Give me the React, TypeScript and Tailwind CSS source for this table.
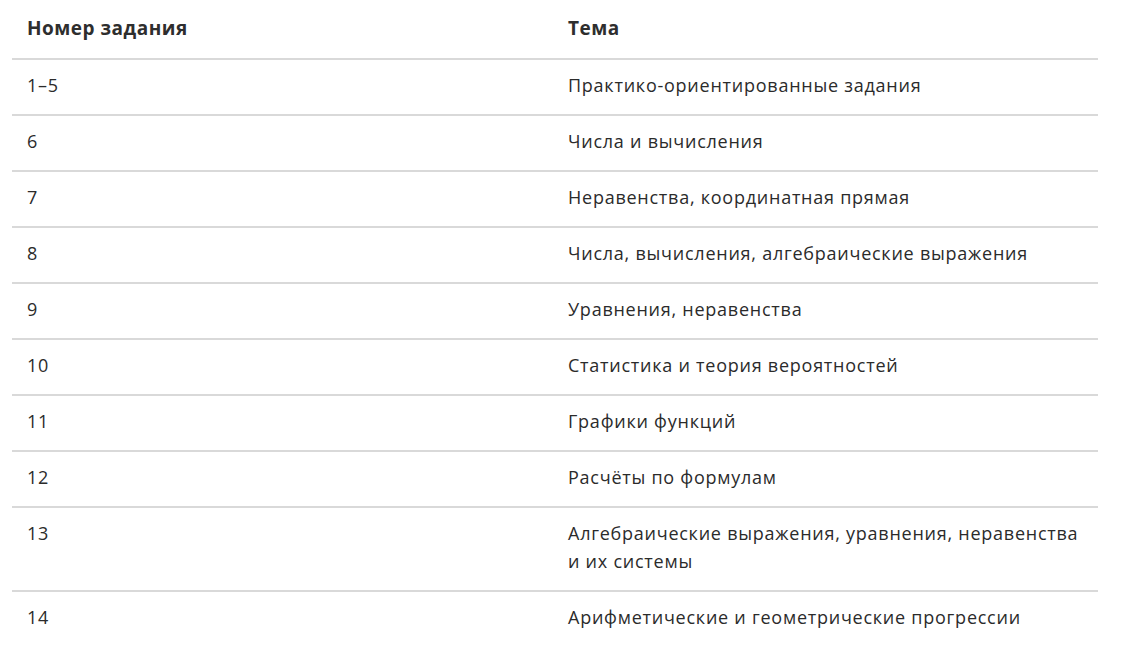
import React from "react";

const rows: [string, string][] = [
  ["1–5", "Практико-ориентированные задания"],
  ["6", "Числа и вычисления"],
  ["7", "Неравенства, координатная прямая"],
  ["8", "Числа, вычисления, алгебраические выражения"],
  ["9", "Уравнения, неравенства"],
  ["10", "Статистика и теория вероятностей"],
  ["11", "Графики функций"],
  ["12", "Расчёты по формулам"],
  ["13", "Алгебраические выражения, уравнения, неравенства и их системы"],
  ["14", "Арифметические и геометрические прогрессии"],
];

export default function App() {
  return (
    <div className="min-h-[656px] w-full bg-white pl-[12px] pr-[30px] text-[#2b2b2b]" style={{ fontFamily: "'Open Sans', 'Noto Sans', sans-serif" }}>
      <div className="grid grid-cols-[541px_1fr] border-b-2 border-[#d9d9d9]">
        <div className="px-[15px] pt-[14px] pb-[16px] text-[19px] font-bold leading-[28px] tracking-[0.5px] text-[#2e2e2e]">Номер задания</div>
        <div className="px-[15px] pt-[14px] pb-[16px] text-[19px] font-bold leading-[28px] tracking-[0.5px] text-[#2e2e2e]">Тема</div>
      </div>
      {rows.map(([n, t], i) => (
        <div
          key={n}
          className={`grid grid-cols-[541px_1fr] ${i < rows.length - 1 ? "border-b-2 border-[#d9d9d9]" : ""}`}
        >
          <div className="px-[15px] pt-[11px] pb-[15px] text-[18px] leading-[28px] tracking-[0.75px]">{n}</div>
          <div className="px-[15px] pt-[11px] pb-[15px] text-[18px] leading-[28px] tracking-[0.75px]">{t}</div>
        </div>
      ))}
    </div>
  );
}
